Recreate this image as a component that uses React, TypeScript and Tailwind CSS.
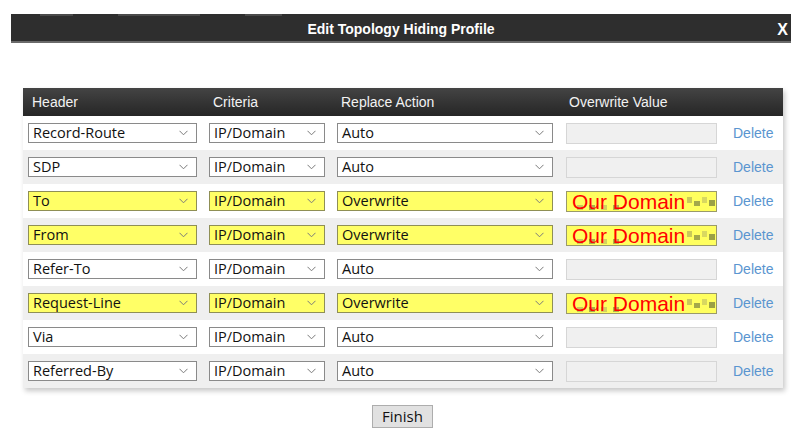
import React from "react";

type Row = {
  header: string;
  action: string;
  value?: string;
};

const rows: Row[] = [
  { header: "Record-Route", action: "Auto" },
  { header: "SDP", action: "Auto" },
  { header: "To", action: "Overwrite", value: "Our Domain" },
  { header: "From", action: "Overwrite", value: "Our Domain" },
  { header: "Refer-To", action: "Auto" },
  { header: "Request-Line", action: "Overwrite", value: "Our Domain" },
  { header: "Via", action: "Auto" },
  { header: "Referred-By", action: "Auto" },
];

function Chevron() {
  return (
    <svg width="9" height="6" viewBox="0 0 9 6" className="shrink-0">
      <polyline points="0.5,0.8 4.5,4.8 8.5,0.8" fill="none" stroke="#7a7a7a" strokeWidth="1" />
    </svg>
  );
}

function FakeSelect({ text, width, hl }: { text: string; width: string; hl: boolean }) {
  return (
    <div
      className={`${width} h-[20px] flex items-center justify-between pl-[4px] pr-[8px] border ${
        hl ? "bg-[#ffff66] border-[#8f8f55]" : "bg-white border-[#8a8a8a]"
      } text-[14.5px] text-[#111] font-['Open_Sans',sans-serif] leading-none`}
    >
      <span>{text}</span>
      <Chevron />
    </div>
  );
}

function ValueBox({ value }: { value?: string }) {
  if (!value) {
    return <div className="w-[151px] h-[21px] bg-[#f0f0f0] border border-[#d6d6d6]" />;
  }
  return (
    <div className="w-[151px] h-[21px] bg-[#ffff5e] border border-[#9a9a6a] flex items-center overflow-hidden relative">
      <span className="pl-[5px] text-[21px] leading-none text-[#ff0000] font-['Liberation_Sans',Arial,sans-serif] whitespace-nowrap relative z-10">
        {value}
      </span>
      {/* pixelated blur after the text */}
      <div className="absolute left-[120px] top-[5px] flex gap-[2px]">
        <div className="w-[5px] h-[6px] bg-[#c9c95a]" />
        <div className="w-[6px] h-[5px] mt-[4px] bg-[#a4a84a]" />
        <div className="w-[5px] h-[6px] bg-[#d8d860]" />
        <div className="w-[6px] h-[6px] mt-[3px] bg-[#9aa046]" />
        <div className="w-[4px] h-[6px] bg-[#bfc256]" />
      </div>
      <div className="absolute left-[10px] top-[13px] flex gap-[6px]">
        <div className="w-[6px] h-[5px] bg-[#c8c85c]" />
        <div className="w-[6px] h-[5px] bg-[#a9ad4c]" />
        <div className="w-[6px] h-[5px] bg-[#d2d25e]" />
        <div className="w-[6px] h-[5px] bg-[#b0b24f]" />
      </div>
    </div>
  );
}

export default function App() {
  return (
    <div className="w-[800px] h-[435px] bg-white overflow-hidden font-['Liberation_Sans',Arial,sans-serif] pt-[14px]">
      {/* Title bar */}
      <div className="ml-[11px] w-[780px] h-[29px] pt-[3px] bg-[#2e2e2e] border-b-2 border-[#6a6a6a] relative flex items-center justify-center">
        <div className="absolute left-[29px] top-0 flex gap-[45px]">
          <div className="w-[33px] h-[2px] bg-[#4a4a4a]" />
          <div className="w-[82px] h-[2px] bg-[#4a4a4a]" />
          <div className="w-[37px] h-[2px] bg-[#4a4a4a]" />
        </div>
        <span className="text-white text-[14px] font-bold">Edit Topology Hiding Profile</span>
        <span className="absolute right-[3px] top-[4px] text-white text-[16px] font-bold">X</span>
      </div>

      {/* Table */}
      <div className="ml-[23px] mt-[45px] w-[760px] shadow-[2px_3px_5px_rgba(0,0,0,0.22)]">
        <div className="h-[28px] bg-gradient-to-b from-[#444] to-[#262626] flex items-center pl-[5px] text-[14px] text-[#f2f2f2]">
          <div className="w-[181px] pl-[4px]">Header</div>
          <div className="w-[128px] pl-[4px]">Criteria</div>
          <div className="w-[229px] pl-[4px]">Replace Action</div>
          <div className="pl-[3px]">Overwrite Value</div>
        </div>
        {rows.map((r, i) => {
          const hl = !!r.value;
          return (
            <div
              key={r.header}
              className={`h-[34px] flex items-center pl-[5px] ${i % 2 === 1 ? "bg-[#efefef]" : "bg-white"}`}
            >
              <FakeSelect text={r.header} width="w-[169px]" hl={hl} />
              <div className="w-[12px]" />
              <FakeSelect text="IP/Domain" width="w-[116px]" hl={hl} />
              <div className="w-[12px]" />
              <FakeSelect text={r.action} width="w-[216px]" hl={hl} />
              <div className="w-[13px]" />
              <ValueBox value={r.value} />
              <span className="ml-[16px] text-[14px] text-[#5a95d0]">Delete</span>
            </div>
          );
        })}
      </div>

      {/* Finish */}
      <div className="flex justify-center mt-[17px] pl-[5px]">
        <button className="h-[23px] px-[9px] bg-[#e1e1e1] border border-[#adadad] text-[15px] text-[#111] font-['Open_Sans',sans-serif] leading-none">
          Finish
        </button>
      </div>
    </div>
  );
}
